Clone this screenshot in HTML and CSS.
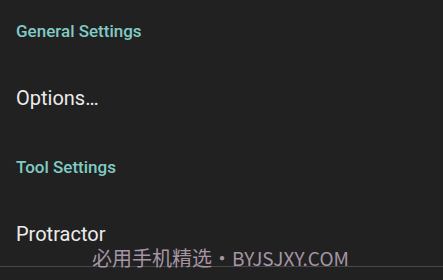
FILE: index.html
```html
<!DOCTYPE html>
<html>
<head>
<meta charset="utf-8">
<link rel="stylesheet" href="styles.css">
</head>
<body>
<div class="screen">
  <div class="category">General Settings</div>
  <div class="item">Options…</div>
  <div class="category">Tool Settings</div>
  <div class="item">Protractor</div>
  <div class="divider"></div>
  <div class="watermark">必用手机精选•<span class="wm-latin">BYJSJXY.COM</span></div>
</div>
</body>
</html>
```
FILE: styles.css
```css
html, body {
  margin: 0;
  padding: 0;
  background: #212121;
}
.screen {
  position: relative;
  width: 443px;
  height: 280px;
  overflow: hidden;
  font-family: Roboto, "Noto Sans", sans-serif;
}
.category {
  height: 52px;
  box-sizing: border-box;
  padding: 21px 0 0 16px;
  font-size: 17px;
  line-height: 20px;
  font-weight: 500;
  color: #80cbc4;
}
.item {
  height: 84px;
  box-sizing: border-box;
  padding: 34px 0 0 16px;
  font-size: 20px;
  line-height: 24px;
  color: #ececec;
}
.divider {
  position: absolute;
  left: 0;
  right: 0;
  top: 266px;
  height: 1px;
  background: #474747;
}
.watermark {
  position: absolute;
  left: 92px;
  top: 245px;
  font-family: "Noto Sans CJK SC", "Noto Sans", sans-serif;
  font-size: 20px;
  line-height: 26px;
  color: #a595a5;
  white-space: nowrap;
}
.wm-latin {
  font-size: 19px;
}
```
